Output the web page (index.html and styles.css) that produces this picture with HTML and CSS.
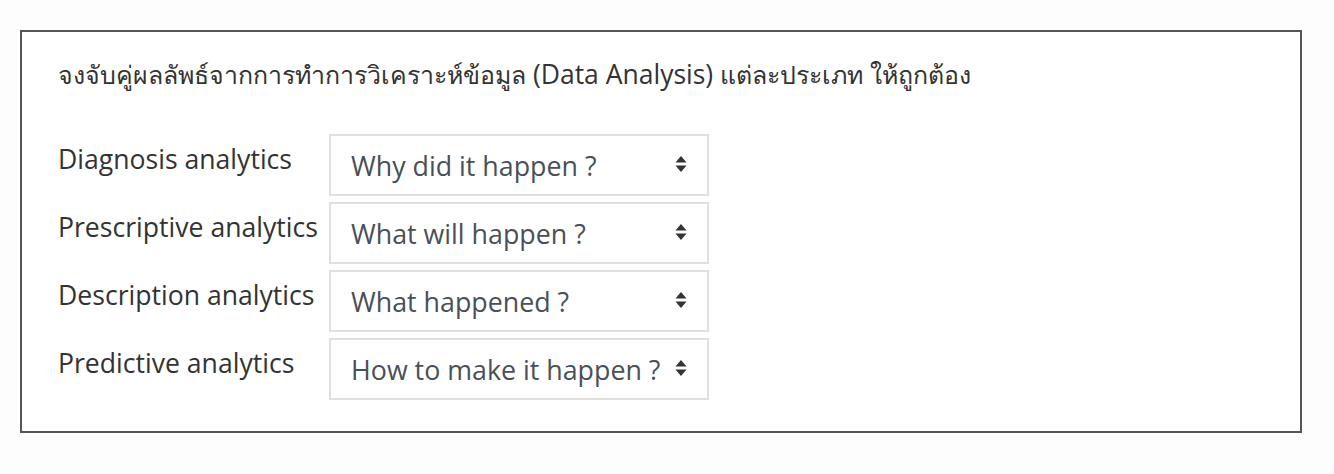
FILE: index.html
```html
<!DOCTYPE html>
<html lang="th">
<head>
<meta charset="utf-8">
<link rel="stylesheet" href="styles.css">
</head>
<body>
<div class="question">
  <div class="qtext"><span class="th">จงจับคู่ผลลัพธ์จากการทำการวิเคราะห์ข้อมูล</span> (Data Analysis) <span class="th">แต่ละประเภท ให้ถูกต้อง</span></div>
  <div class="answers">
    <div class="label">Diagnosis analytics</div>
    <div class="sel"><select><option>Why did it happen ?</option></select><svg class="arrows" viewBox="0 0 12 18" width="12" height="18"><path d="M6 1 L11.5 7.5 H0.5 Z M6 17 L11.5 10.5 H0.5 Z" fill="#333"/></svg></div>
    <div class="label">Prescriptive analytics</div>
    <div class="sel"><select><option>What will happen ?</option></select><svg class="arrows" viewBox="0 0 12 18" width="12" height="18"><path d="M6 1 L11.5 7.5 H0.5 Z M6 17 L11.5 10.5 H0.5 Z" fill="#333"/></svg></div>
    <div class="label">Description analytics</div>
    <div class="sel"><select><option>What happened ?</option></select><svg class="arrows" viewBox="0 0 12 18" width="12" height="18"><path d="M6 1 L11.5 7.5 H0.5 Z M6 17 L11.5 10.5 H0.5 Z" fill="#333"/></svg></div>
    <div class="label">Predictive analytics</div>
    <div class="sel"><select><option>How to make it happen ?</option></select><svg class="arrows" viewBox="0 0 12 18" width="12" height="18"><path d="M6 1 L11.5 7.5 H0.5 Z M6 17 L11.5 10.5 H0.5 Z" fill="#333"/></svg></div>
  </div>
</div>
</body>
</html>
```
FILE: styles.css
```css
html, body {
  margin: 0;
  padding: 0;
  background: #fdfdfd;
}
body {
  font-family: "Open Sans", "Noto Sans", "DejaVu Sans", sans-serif;
  color: #373a3c;
}
.question {
  box-sizing: border-box;
  margin: 30px 0 0 20px;
  width: 1282px;
  height: 403px;
  border: 2px solid #565656;
  background: #fff;
  padding: 23px 36px 0 36px;
}
.qtext {
  font-size: 26.5px;
  line-height: 38px;
  color: #333;
  white-space: nowrap;
}
.qtext .th {
  font-size: 24.9px;
}
.answers {
  margin-top: 41px;
  display: grid;
  grid-template-columns: 271px 380px;
  row-gap: 6px;
}
.label {
  font-size: 26.6px;
  line-height: 38px;
  padding-top: 6px;
  color: #333;
  white-space: nowrap;
}
.sel {
  position: relative;
  height: 62px;
}
.sel select {
  appearance: none;
  -webkit-appearance: none;
  box-sizing: border-box;
  width: 100%;
  height: 100%;
  border: 2px solid #e0e0e0;
  border-radius: 0;
  background: #fff;
  font-family: "Open Sans", sans-serif;
  font-size: 26.8px;
  color: #495057;
  padding: 0 0 0 20px;
  margin: 0;
}
.arrows {
  position: absolute;
  right: 22px;
  top: 21px;
  pointer-events: none;
}
```
